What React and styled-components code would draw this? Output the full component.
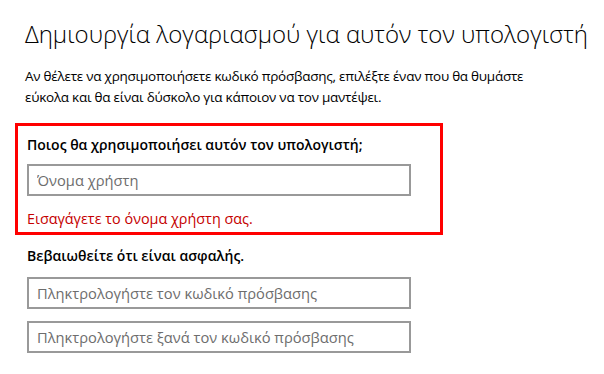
import styled, { createGlobalStyle } from 'styled-components';

const GlobalStyle = createGlobalStyle`
  body {
    margin: 0;
    background: #ffffff;
    font-family: 'Open Sans', 'Noto Sans', sans-serif;
    color: #000000;
  }
`;

const Page = styled.main`
  padding: 16px 0 0 15px;
  width: 604px;
  box-sizing: border-box;
`;

const Title = styled.h1`
  margin: 0 0 14px 10px;
  font-size: 24px;
  font-weight: 300;
  line-height: 36px;
  white-space: nowrap;
  color: #000;
`;

const Intro = styled.p`
  margin: 0 0 15px 10px;
  width: 500px;
  font-size: 13.5px;
  letter-spacing: -0.25px;
  line-height: 21px;
  color: #000;
`;

const Section = styled.section`
  width: 428px;
  box-sizing: border-box;
  border: 3px solid ${(p) => (p.$invalid ? '#ff0000' : 'transparent')};
  padding: ${(p) => (p.$invalid ? '9px 9px 3px' : '8px 9px 0')};
  display: flex;
  flex-direction: column;
`;

const Label = styled.label`
  font-size: 14px;
  font-weight: 600;
  line-height: 20px;
  color: #000;
`;

const Field = styled.input`
  width: 384px;
  height: 32px;
  box-sizing: border-box;
  margin-top: ${(p) => p.$gap}px;
  border: 2px solid #999999;
  padding: 0 8px;
  font-family: inherit;
  font-size: 14.7px;
  color: #000;
  outline: none;
  background: #fff;

  &::placeholder {
    color: #6d6d6d;
  }
`;

const ErrorText = styled.div`
  margin-top: 13px;
  font-size: 14.4px;
  line-height: 20px;
  color: #c50000;
`;

export default function App() {
  return (
    <Page>
      <GlobalStyle />
      <Title>Δημιουργία λογαριασμού για αυτόν τον υπολογιστή</Title>
      <Intro>
        Αν θέλετε να χρησιμοποιήσετε κωδικό πρόσβασης, επιλέξτε έναν που θα θυμάστε
        εύκολα και θα είναι δύσκολο για κάποιον να τον μαντέψει.
      </Intro>
      <Section $invalid>
        <Label>Ποιος θα χρησιμοποιήσει αυτόν τον υπολογιστή;</Label>
        <Field $gap={9} placeholder="Όνομα χρήστη" />
        <ErrorText>Εισαγάγετε το όνομα χρήστη σας.</ErrorText>
      </Section>
      <Section>
        <Label>Βεβαιωθείτε ότι είναι ασφαλής.</Label>
        <Field $gap={11} type="password" placeholder="Πληκτρολογήστε τον κωδικό πρόσβασης" />
        <Field $gap={12} type="password" placeholder="Πληκτρολογήστε ξανά τον κωδικό πρόσβασης" />
      </Section>
    </Page>
  );
}
